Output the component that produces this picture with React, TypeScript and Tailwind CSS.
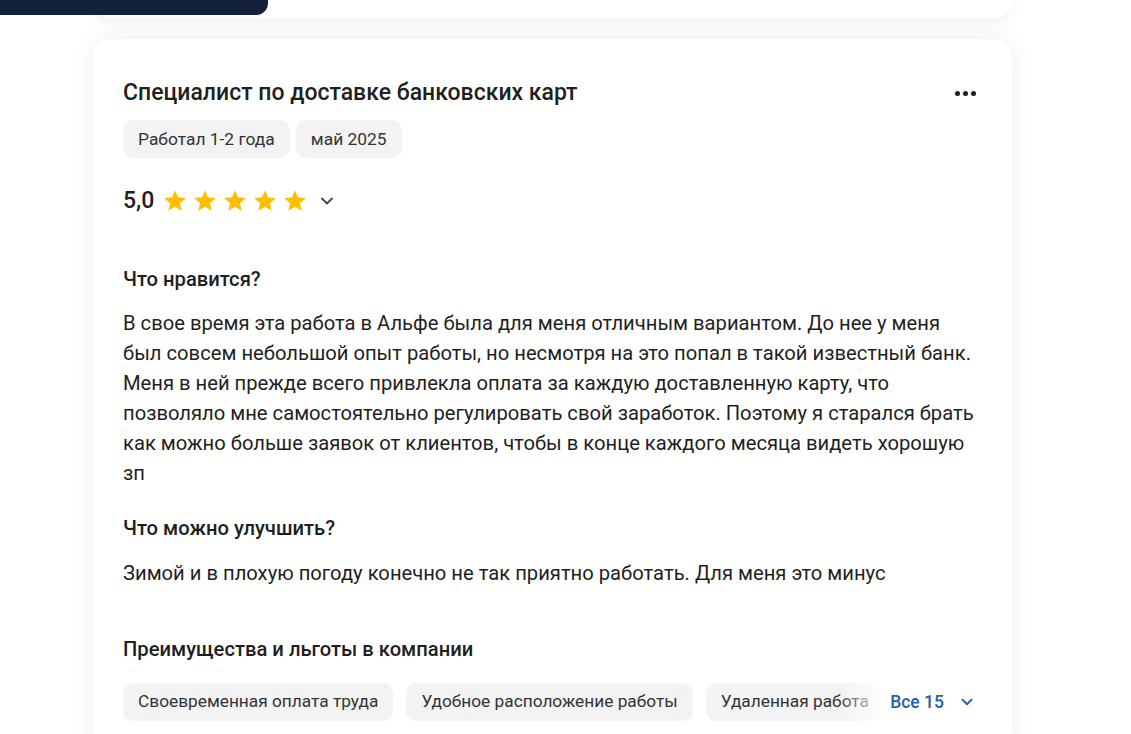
import { ChevronDown } from "lucide-react"

const liked = [
  "В свое время эта работа в Альфе была для меня отличным вариантом. До нее у меня",
  "был совсем небольшой опыт работы, но несмотря на это попал в такой известный банк.",
  "Меня в ней прежде всего привлекла оплата за каждую доставленную карту, что",
  "позволяло мне самостоятельно регулировать свой заработок. Поэтому я старался брать",
  "как можно больше заявок от клиентов, чтобы в конце каждого месяца видеть хорошую",
  "зп",
]

const perks = ["Своевременная оплата труда", "Удобное расположение работы", "Удаленная работа"]

function Star() {
  return (
    <svg width="26" height="26" viewBox="0 0 24 24" className="text-[#ffbf00]">
      <path
        fill="currentColor"
        d="M12 17.27L18.18 21l-1.64-7.03L22 9.24l-7.19-.61L12 2 9.19 8.63 2 9.24l5.46 4.73L5.82 21z"
      />
    </svg>
  )
}

export default function App() {
  return (
    <div className="relative h-[734px] overflow-hidden bg-white font-['Roboto',sans-serif] text-[#1f1f1f]">
      <div className="absolute left-0 top-0 z-10 h-[15px] w-[268px] rounded-br-[12px] bg-[#13213a]" />

      <div className="ml-[93px] w-[919px]">
        <div className="h-[18px] rounded-b-[18px] bg-white shadow-[0_2px_16px_rgba(0,0,0,0.08)]" />

        <div className="mt-[21px] rounded-[18px] bg-white px-[30px] pt-[40px] pb-[40px] shadow-[0_0_24px_rgba(0,0,0,0.07)]">
          <div className="flex items-center justify-between">
            <h2 className="text-[23px] font-medium leading-[28px]">Специалист по доставке банковских карт</h2>
            <div className="mr-[6px] flex gap-[3px]">
              <span className="h-[5px] w-[5px] rounded-full bg-[#1f1f1f]" />
              <span className="h-[5px] w-[5px] rounded-full bg-[#1f1f1f]" />
              <span className="h-[5px] w-[5px] rounded-full bg-[#1f1f1f]" />
            </div>
          </div>

          <div className="mt-[13px] flex gap-[6px]">
            <span className="flex h-[38px] items-center rounded-[10px] bg-[#f3f3f3] px-[15px] text-[17.4px] text-[#333]">
              Работал 1-2 года
            </span>
            <span className="flex h-[38px] items-center rounded-[10px] bg-[#f3f3f3] px-[15px] text-[17.4px] text-[#333]">
              май 2025
            </span>
          </div>

          <div className="mt-[29px] flex h-[28px] items-center">
            <span className="text-[23px] font-medium leading-[28px]">5,0</span>
            <div className="ml-[8px] flex gap-[4px]">
              <Star />
              <Star />
              <Star />
              <Star />
              <Star />
            </div>
            <ChevronDown size={20} strokeWidth={2.2} className="ml-[9px] text-[#444]" />
          </div>

          <h3 className="mt-[52px] text-[20.2px] font-medium leading-[24px]">Что нравится?</h3>
          <p className="mt-[17px] text-[20.2px] leading-[30px]">
            {liked.map((line) => (
              <span key={line} className="block whitespace-nowrap">
                {line}
              </span>
            ))}
          </p>

          <h3 className="mt-[28px] text-[20.2px] font-medium leading-[24px]">Что можно улучшить?</h3>
          <p className="mt-[18px] text-[20.2px] leading-[30px]">
            Зимой и в плохую погоду конечно не так приятно работать. Для меня это минус
          </p>

          <h3 className="mt-[49px] text-[20.2px] font-medium leading-[24px]">Преимущества и льготы в компании</h3>
          <div className="relative mt-[22px] flex gap-[13px] overflow-hidden">
            {perks.map((p) => (
              <span
                key={p}
                className="flex h-[38px] shrink-0 items-center whitespace-nowrap rounded-[10px] bg-[#f3f3f3] px-[15px] text-[17.3px] text-[#333]"
              >
                {p}
              </span>
            ))}
            <div className="absolute right-0 top-0 flex h-[38px] items-center">
              <div className="h-full w-[48px] bg-gradient-to-r from-white/0 to-white" />
              <div className="flex h-full items-center gap-[14px] bg-white pl-[4px] pr-[6px]">
                <span className="text-[17.5px] font-medium text-[#2a5ea8]">Все 15</span>
                <ChevronDown size={18} strokeWidth={2.5} className="text-[#2a5ea8]" />
              </div>
            </div>
          </div>
        </div>
      </div>
    </div>
  )
}
